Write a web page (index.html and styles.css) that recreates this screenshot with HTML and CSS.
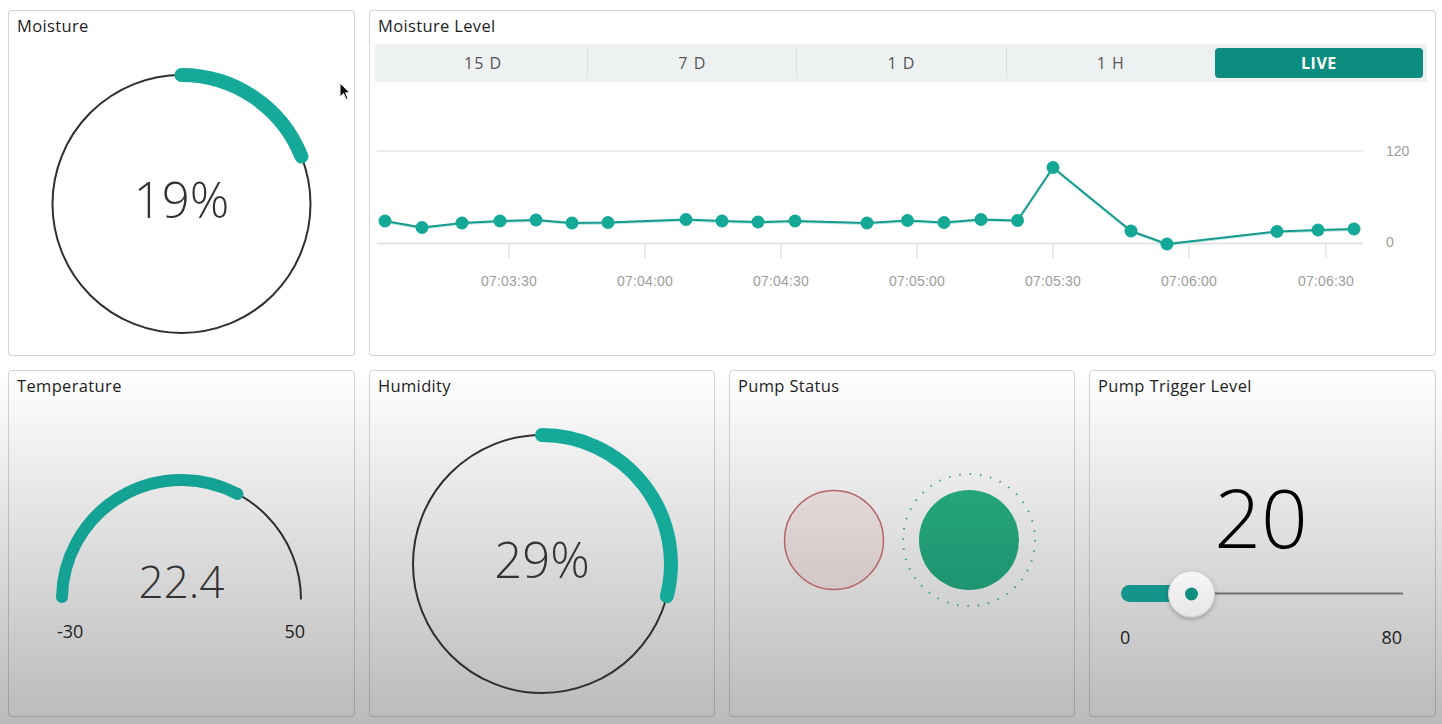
FILE: index.html
```html
<!DOCTYPE html>
<html lang="en">
<head>
<meta charset="utf-8">
<title>Dashboard</title>
<link rel="stylesheet" href="styles.css">
</head>
<body>
<main class="dash">
  <section class="card">
    <div class="card-title">Moisture</div>
    <svg class="widget" viewBox="9 37 345 318" width="345" height="318">
      <circle cx="181.5" cy="204" r="129" class="ring"/>
      <path d="M 181.5 75 A 129 129 0 0 1 301.4 156.5" class="arc"/>
      <text x="181.5" y="218" class="big-val">19%</text>
    </svg>
  </section>

  <section class="card span3">
    <div class="card-title">Moisture Level</div>
    <div class="tabs">
      <div class="tab">15 D</div>
      <div class="tab sep">7 D</div>
      <div class="tab sep">1 D</div>
      <div class="tab sep">1 H</div>
      <div class="tab live">LIVE</div>
    </div>
    <svg class="chart" viewBox="370 82 1065 273" width="1065" height="273">
      <line x1="377" y1="151" x2="1363" y2="151" class="grid"/>
      <line x1="377" y1="243.5" x2="1363" y2="243.5" class="grid base"/>
      <g class="ticks">
        <line x1="509" y1="245" x2="509" y2="258"/>
        <line x1="645" y1="245" x2="645" y2="258"/>
        <line x1="781" y1="245" x2="781" y2="258"/>
        <line x1="917" y1="245" x2="917" y2="258"/>
        <line x1="1053" y1="245" x2="1053" y2="258"/>
        <line x1="1189" y1="245" x2="1189" y2="258"/>
        <line x1="1326" y1="245" x2="1326" y2="258"/>
      </g>
      <g class="xlab">
        <text x="509" y="286">07:03:30</text>
        <text x="645" y="286">07:04:00</text>
        <text x="781" y="286">07:04:30</text>
        <text x="917" y="286">07:05:00</text>
        <text x="1053" y="286">07:05:30</text>
        <text x="1189" y="286">07:06:00</text>
        <text x="1326" y="286">07:06:30</text>
      </g>
      <g class="ylab">
        <text x="1386" y="156">120</text>
        <text x="1386" y="247">0</text>
      </g>
      <polyline class="series-shadow" points="385,222 422,228.5 462,224 500,222 536,221 572,224 608,223.5 686,220.5 722,222 758,223 795,222 867,224 907.5,221.5 944,223.5 981,220.5 1017.5,221.5 1053,168.5 1131,232 1167,245 1277,232.5 1318,231 1354,230"/>
      <polyline class="series" points="385,221 422,227.5 462,223 500,221 536,220 572,223 608,222.5 686,219.5 722,221 758,222 795,221 867,223 907.5,220.5 944,222.5 981,219.5 1017.5,220.5 1053,167.5 1131,231 1167,244 1277,231.5 1318,230 1354,229"/>
      <g class="dots">
        <circle cx="385" cy="221" r="6.5"/>
        <circle cx="422" cy="227.5" r="6.5"/>
        <circle cx="462" cy="223" r="6.5"/>
        <circle cx="500" cy="221" r="6.5"/>
        <circle cx="536" cy="220" r="6.5"/>
        <circle cx="572" cy="223" r="6.5"/>
        <circle cx="608" cy="222.5" r="6.5"/>
        <circle cx="686" cy="219.5" r="6.5"/>
        <circle cx="722" cy="221" r="6.5"/>
        <circle cx="758" cy="222" r="6.5"/>
        <circle cx="795" cy="221" r="6.5"/>
        <circle cx="867" cy="223" r="6.5"/>
        <circle cx="907.5" cy="220.5" r="6.5"/>
        <circle cx="944" cy="222.5" r="6.5"/>
        <circle cx="981" cy="219.5" r="6.5"/>
        <circle cx="1017.5" cy="220.5" r="6.5"/>
        <circle cx="1053" cy="167.5" r="6.5"/>
        <circle cx="1131" cy="231" r="6.5"/>
        <circle cx="1167" cy="244" r="6.5"/>
        <circle cx="1277" cy="231.5" r="6.5"/>
        <circle cx="1318" cy="230" r="6.5"/>
        <circle cx="1354" cy="229" r="6.5"/>
      </g>
    </svg>
  </section>

  <section class="card">
    <div class="card-title">Temperature</div>
    <svg class="widget" viewBox="9 397 345 319" width="345" height="319">
      <path d="M 62 599.5 A 119.5 119.5 0 0 1 301 599.5" class="ring"/>
      <path d="M 62 597 A 119.5 119.5 0 0 1 237.4 493.9" class="arc thin"/>
      <text x="181.5" y="598" class="mid-val">22.4</text>
      <text x="57" y="638" class="scale">-30</text>
      <text x="305" y="638" class="scale end">50</text>
    </svg>
  </section>

  <section class="card">
    <div class="card-title">Humidity</div>
    <svg class="widget" viewBox="370 397 344 319" width="344" height="319">
      <circle cx="542" cy="564" r="129" class="ring"/>
      <path d="M 542 435 A 129 129 0 0 1 666.9 596.1" class="arc"/>
      <text x="542" y="578" class="big-val">29%</text>
    </svg>
  </section>

  <section class="card">
    <div class="card-title">Pump Status</div>
    <svg class="widget" viewBox="730 397 344 319" width="344" height="319">
      <defs>
        <linearGradient id="gOn" x1="0" y1="0" x2="0" y2="1">
          <stop offset="0" stop-color="#24a57b"/>
          <stop offset="1" stop-color="#1e9470"/>
        </linearGradient>
      </defs>
      <circle cx="834" cy="540" r="49.5" class="led-off"/>
      <circle cx="969" cy="540" r="66" class="led-ring"/>
      <circle cx="969" cy="540" r="50" fill="url(#gOn)"/>
    </svg>
  </section>

  <section class="card">
    <div class="card-title">Pump Trigger Level</div>
    <svg class="widget" viewBox="1090 397 345 319" width="345" height="319">
      <defs>
        <filter id="sh" x="-50%" y="-50%" width="200%" height="200%">
          <feDropShadow dx="0" dy="2" stdDeviation="2" flood-color="#000" flood-opacity="0.25"/>
        </filter>
        <linearGradient id="gThumb" x1="0" y1="0" x2="0" y2="1">
          <stop offset="0" stop-color="#f7f7f7"/>
          <stop offset="1" stop-color="#e6e6e6"/>
        </linearGradient>
      </defs>
      <text x="1261" y="548" class="huge-val">20</text>
      <line x1="1192" y1="593.5" x2="1403" y2="593.5" class="track"/>
      <rect x="1121" y="585" width="80" height="17" rx="8.5" class="fill"/>
      <circle cx="1191.5" cy="594" r="23" fill="url(#gThumb)" class="thumb" filter="url(#sh)"/>
      <circle cx="1191.5" cy="594" r="6.5" class="knob"/>
      <text x="1120" y="644" class="scale">0</text>
      <text x="1402" y="644" class="scale end">80</text>
    </svg>
  </section>
</main>
<svg class="cursor" width="12" height="19" viewBox="0 0 12 19">
  <path d="M1 1 L1 15 L4.5 11.5 L7 17.5 L9 16.6 L6.6 10.8 L11 10.8 Z" fill="#111" stroke="#fff" stroke-width="1"/>
</svg>
</body>
</html>
```

FILE: styles.css
```css
* { box-sizing: border-box; }

html, body {
  margin: 0;
  padding: 0;
}

body {
  width: 1442px;
  height: 724px;
  overflow: hidden;
  position: relative;
  font-family: "Open Sans", "Noto Sans", sans-serif;
  color: #222;
  background: linear-gradient(to bottom, #ffffff 0, #ffffff 372px, #bababa 724px);
}

.dash {
  display: grid;
  grid-template-columns: 347px 346px 346px 347px;
  grid-template-rows: 346px 347px;
  gap: 14px;
  padding: 10px 0 0 8px;
}

.card {
  border: 1px solid rgba(0, 0, 0, 0.17);
  border-radius: 4px;
  display: flex;
  flex-direction: column;
  overflow: hidden;
}

.span3 { grid-column: span 3; background: #fff; }
.dash > .card:first-child { background: #fff; }

.card-title {
  padding: 3px 8px 0 8px;
  height: 26px;
  line-height: 23px;
  font-size: 16.5px;
  letter-spacing: 0.35px;
  color: #1e1e1e;
  white-space: nowrap;
}

.widget, .chart { display: block; }

.ring {
  fill: none;
  stroke: #2f2f2f;
  stroke-width: 2;
}

.arc {
  fill: none;
  stroke: #15a99a;
  stroke-width: 14;
  stroke-linecap: round;
}
.arc.thin { stroke-width: 12; stroke: #14a294; }

.big-val {
  font-family: "Open Sans", sans-serif;
  font-size: 49px;
  font-weight: 300;
  fill: #333;
  text-anchor: middle;
}
.mid-val {
  font-family: "Open Sans", sans-serif;
  font-size: 44px;
  font-weight: 300;
  fill: #333;
  text-anchor: middle;
}
.huge-val {
  font-family: "Open Sans", sans-serif;
  font-size: 82px;
  font-weight: 300;
  fill: #000;
  text-anchor: middle;
}
.scale {
  font-family: "Open Sans", sans-serif;
  font-size: 18px;
  fill: #1e1e1e;
}
.scale.end { text-anchor: end; }

/* tabs */
.tabs {
  display: flex;
  height: 38px;
  margin: 7px 8px 0 5px;
  padding: 4px;
  background: #eef1f1;
  border-radius: 2px;
}
.tab {
  flex: 1;
  display: flex;
  align-items: center;
  justify-content: center;
  font-size: 16px;
  letter-spacing: 1px;
  color: #555;
}
.tab.sep { border-left: 1px solid #dcdfdf; }
.tab.live {
  background: #0b8c7e;
  color: #fff;
  font-weight: 700;
  letter-spacing: 0.5px;
  border-radius: 4px;
}

/* chart */
.grid { stroke: #ececec; stroke-width: 2; }
.grid.base { stroke: #e4e4e8; }
.ticks line { stroke: #d6d6d6; stroke-width: 1; }
.xlab text {
  font-family: "Liberation Sans", Arial, sans-serif;
  font-size: 14px;
  fill: #9d9d9d;
  text-anchor: middle;
  letter-spacing: 0.2px;
}
.ylab text {
  font-family: "Liberation Sans", Arial, sans-serif;
  font-size: 14px;
  fill: #9d9d9d;
}
.series { fill: none; stroke: #179b8c; stroke-width: 2; stroke-linejoin: round; }
.series-shadow { fill: none; stroke: #7fd6cc; stroke-width: 2; opacity: 0.6; }
.dots circle { fill: #14a897; }

/* pump */
.led-off {
  fill: rgba(190, 90, 90, 0.1);
  stroke: #b86466;
  stroke-width: 1.5;
}
.led-ring {
  fill: none;
  stroke: #3c9a86;
  stroke-width: 2;
  stroke-dasharray: 1.4 8.97;
}

/* slider */
.track { stroke: #707070; stroke-width: 2; }
.fill { fill: #14948a; }
.thumb { stroke: #cfcfcf; stroke-width: 1; }
.knob { fill: #12907f; }

.cursor {
  position: absolute;
  left: 339px;
  top: 82px;
}
```
